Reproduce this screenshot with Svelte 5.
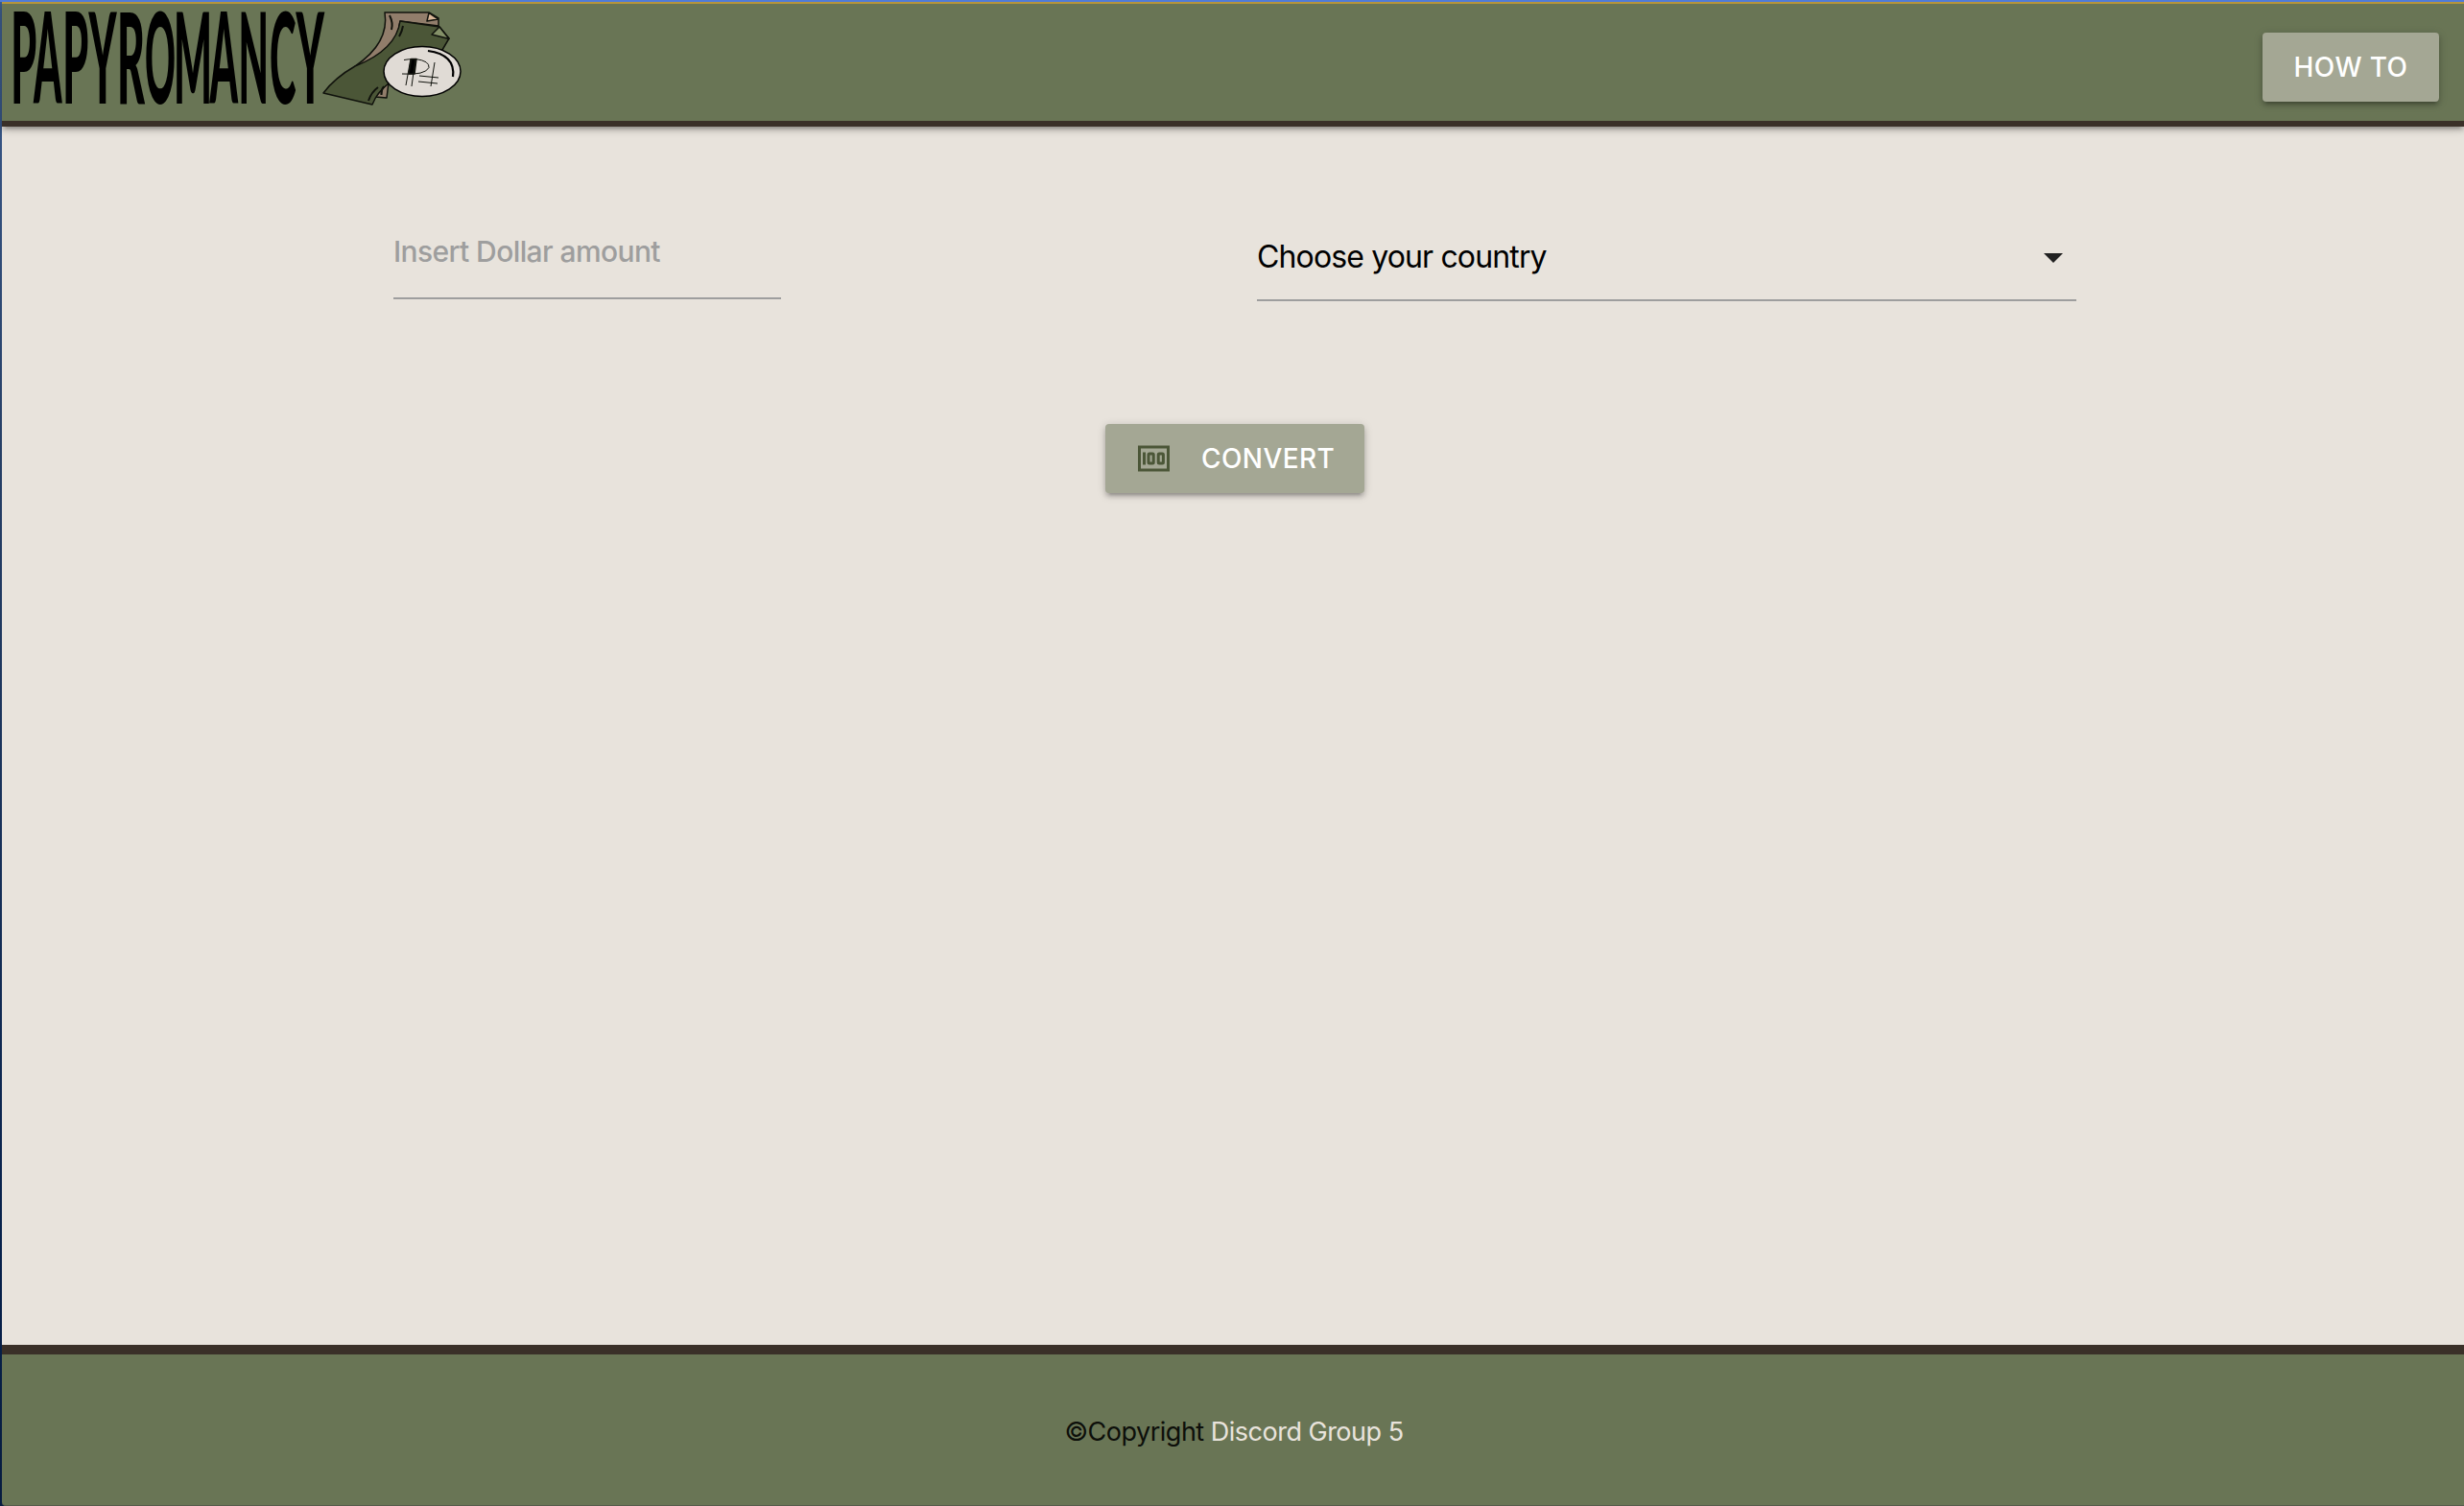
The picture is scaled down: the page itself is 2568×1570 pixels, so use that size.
<script>
  // Horizontal squeeze applied to the whole wordmark.
  const squeeze = 0.33;
  // Each wordmark letter with the left edge and width of its box on the logo canvas.
  const letters = [
    ['P', 11.3, 27],
    ['A', 35, 29.5],
    ['P', 65.2, 27],
    ['Y', 92.5, 29],
    ['R', 122, 29],
    ['O', 151, 32],
    ['M', 181, 40],
    ['A', 218.5, 29.5],
    ['N', 248.6, 31.5],
    ['C', 281, 27.5],
    ['Y', 308.5, 29.5]
  ];
</script>

<div class="window">
  <header class="nav">
    <svg class="logo" viewBox="0 0 500 122" role="img" aria-label="Papyromancy">
      <text class="wordmark" transform="translate(0 104) scale({squeeze} 1)" y="0">{#each letters as [glyph, x, width]}<tspan x={x / squeeze} textLength={width / squeeze} lengthAdjust="spacingAndGlyphs">{glyph}</tspan>{/each}</text>
      <g class="ink" transform="translate(320 -4)">
        <path class="tan" d="M81 13h46l10 6v8l-40-5q-4 34-47 47q36-24 31-56z" />
        <path class="peach" d="M127 13.500l9.500 6.500l-11.500 2z" />
        <path class="tan" d="M85 86l-14 15l12 1z" />
        <path class="green" d="M97 22l41 6l10 12l-7 12l-56 35q-12 9-17 22l-51-12q12-16 33-28q43-17 47-47z" />
        <path class="sage" d="M138 28l10 12.500l-18-4.500z" />
        <path class="fold" d="M86 16q4 8 2 15M100 27q-1 6-4 11M74 91q-7 5-10 14M80 90q-3 4-2.500 9" />
        <ellipse class="coin" cx="120" cy="74.500" rx="40" ry="26" />
        <path class="shine" d="M126 53q29 4 26 27" />
        <path class="bar" d="M108.500 61.500h5.500l-2 15.500h-6z" />
        <path class="rune" d="M101 62.500q5-1 12-1q15 2 14 9q-4 8-28 6.500M108 61l-5 28M113 61l-4 29M133 65l-4 25M117 79l20 2M116 85l20 2" />
      </g>
    </svg>
    <button class="btn howto">HOW TO</button>
  </header>

  <main>
    <div class="fields">
      <label class="amount"><input placeholder="Insert Dollar amount" /></label>
      <div class="country">
        <span>Choose your country</span>
        <svg class="caret" viewBox="0 0 20 10"><path d="M0 0h20l-10 10z" /></svg>
      </div>
    </div>
    <button class="btn convert">
      <svg class="money" viewBox="0 0 34 28">
        <path class="frame" d="M1.500 2h30v24h-30z" />
        <path class="one" d="M5 7.500h3v13h-3z" />
        <rect class="zero" x="11" y="9" width="5.200" height="10" rx="1" />
        <rect class="zero" x="21.200" y="9" width="5.200" height="10" rx="1" />
      </svg>
      <span>CONVERT</span>
    </button>
  </main>

  <footer><p>©Copyright <span>Discord Group 5</span></p></footer>
</div>

<style>
  :global(body) {
    margin: 0;
    background: #e8e3dc;
  }
  .window {
    box-sizing: border-box;
    height: 1570px;
    display: flex;
    flex-direction: column;
    background: linear-gradient(#3c5c8e, #263f66 30%, #06204a 85%, #071c40);
    border-top: 2px solid #4f7bd9;
    padding-left: 2px;
    font-family: Inter, 'Liberation Sans', sans-serif;
    overflow: hidden;
  }
  .nav {
    position: relative;
    box-sizing: border-box;
    height: 130px;
    flex: none;
    display: flex;
    justify-content: space-between;
    align-items: flex-start;
    background: #697555;
    border-top: 2px solid #b5953c;
    border-bottom: 6px solid #3a3028;
    box-shadow: 0 4px 4px rgba(0, 0, 0, 0.14), 0 6px 2px -4px rgba(0, 0, 0, 0.12), 0 2px 10px rgba(0, 0, 0, 0.2);
    padding-right: 26px;
  }
  .logo {
    width: 500px;
    height: 122px;
    margin-left: -2px;
    overflow: visible;
  }
  .wordmark {
    font-family: Lato, sans-serif;
    font-weight: 900;
    font-size: 132px;
    fill: #000;
  }
  .ink {
    stroke: #10120c;
    stroke-width: 1.500;
    stroke-linejoin: round;
  }
  .tan { fill: #917d6b; }
  .peach { fill: #d8b698; }
  .green { fill: #4b5637; }
  .sage { fill: #849068; }
  .coin { fill: #e0dbd5; stroke: #000; }
  .fold, .shine, .rune { fill: none; }
  .fold { stroke-width: 2; }
  .shine { stroke: #000; stroke-width: 2.200; }
  .rune { stroke-width: 1; }
  .bar { fill: #000; }
  .btn {
    box-sizing: border-box;
    display: flex;
    align-items: center;
    height: 72px;
    border: 0;
    border-radius: 4px;
    background: #a4a794;
    color: #fff;
    font: 450 28px/72px Inter, 'Liberation Sans', sans-serif;
    letter-spacing: 0.4px;
    box-shadow: 0 4px 4px rgba(0, 0, 0, 0.14), 0 6px 2px -4px rgba(0, 0, 0, 0.12), 0 2px 10px rgba(0, 0, 0, 0.2);
  }
  .howto {
    width: 184px;
    margin-top: 30px;
    padding: 0;
    justify-content: center;
  }
  main {
    flex: 1;
    background: #e8e3dc;
    padding-top: 90px;
  }
  .fields {
    display: flex;
    align-items: flex-start;
    padding-left: 408px;
  }
  .amount {
    width: 404px;
    margin-right: 496px;
  }
  input {
    box-sizing: border-box;
    display: block;
    width: 100%;
    height: 90px;
    padding: 0 0 9px;
    border: 0;
    border-bottom: 2px solid #9e9e9e;
    background: transparent;
    outline: none;
    font: 450 30px Inter, 'Liberation Sans', sans-serif;
    letter-spacing: -0.6px;
  }
  input::placeholder {
    color: #9e9e9e;
    opacity: 1;
  }
  .country {
    box-sizing: border-box;
    width: 854px;
    height: 92px;
    display: flex;
    justify-content: space-between;
    align-items: center;
    padding: 0 14px 0 0;
    border-bottom: 2px solid #9e9e9e;
    font-size: 32px;
    letter-spacing: -0.86px;
    color: #000;
  }
  .caret {
    width: 20px;
    height: 10px;
    margin-top: 4px;
    fill: #212121;
  }
  .convert {
    width: 270px;
    margin: 128px 0 0 1150px;
    padding: 0 0 0 34px;
  }
  .money {
    width: 34px;
    height: 28px;
    margin-right: 32px;
  }
  .frame, .zero {
    fill: none;
    stroke: #4b5637;
    stroke-width: 3;
  }
  .one { fill: #4b5637; }
  footer {
    box-sizing: border-box;
    height: 168px;
    flex: none;
    display: flex;
    justify-content: center;
    background: #697555;
    border-top: 10px solid #3a3028;
    border-bottom: 1px solid #565b4b;
    border-bottom-left-radius: 4px;
    color: #0d0f0a;
    font-size: 27px;
    letter-spacing: -0.5px;
  }
  footer p {
    margin: 64px 0 0;
    padding-left: 2px;
    line-height: 34px;
  }
  footer span { color: #e8e3dc; }
</style>
